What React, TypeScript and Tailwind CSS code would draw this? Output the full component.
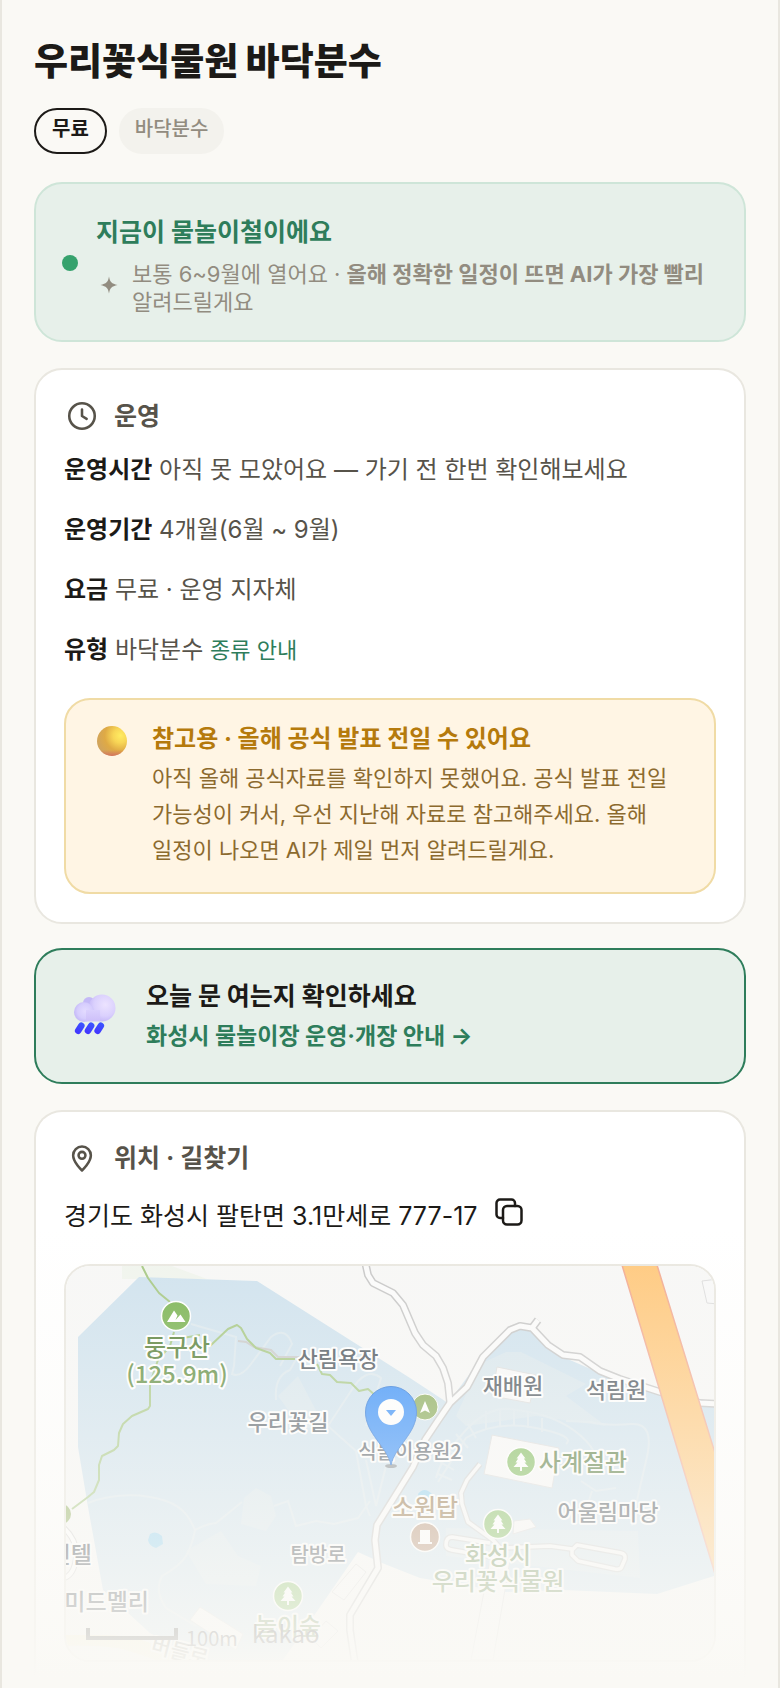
import type { ReactNode } from "react";

const FONT = "font-['Inter','Noto_Sans_CJK_KR',sans-serif]";

function ClockIcon() {
  return (
    <svg viewBox="0 0 24 24" className="size-9 shrink-0" fill="none" stroke="currentColor" strokeWidth="1.7" strokeLinecap="round" strokeLinejoin="round" aria-hidden="true">
      <circle cx="12" cy="12" r="8.5" />
      <path d="M12 7.6V12l3.1 1.9" />
    </svg>
  );
}

function PlaceIcon() {
  return (
    <svg viewBox="0 0 24 24" className="size-9 shrink-0" fill="none" stroke="currentColor" strokeWidth="1.7" strokeLinecap="round" strokeLinejoin="round" aria-hidden="true">
      <path d="M12 20.3s5.9-5.3 5.9-10.1a5.9 5.9 0 0 0-11.8 0c0 4.8 5.9 10.1 5.9 10.1z" />
      <circle cx="12" cy="10.2" r="2.3" />
    </svg>
  );
}

function CopyIcon() {
  return (
    <svg viewBox="0 0 28 28" className="size-7" fill="none" stroke="currentColor" strokeWidth="2.5" strokeLinejoin="round" strokeLinecap="round" aria-hidden="true">
      <rect x="8" y="8" width="18.5" height="18.5" rx="4" />
      <path d="M8 20H5a3.5 3.5 0 0 1-3.5-3.5V5A3.5 3.5 0 0 1 5 1.5h11.5A3.5 3.5 0 0 1 20 5v3" />
    </svg>
  );
}

function SparkleIcon() {
  return (
    <svg viewBox="0 0 26 26" className="mt-3 size-[26px] shrink-0" fill="currentColor" aria-hidden="true">
      <path d="M13 4.5c.9 5.3 2.600 7.200 8.500 8.500-5.900 1.300-7.600 3.200-8.500 8.500-.9-5.300-2.600-7.200-8.500-8.500 5.900-1.300 7.600-3.200 8.500-8.500z" />
    </svg>
  );
}

function OrbIcon() {
  return (
    <svg viewBox="0 0 36 36" className="size-9 shrink-0" aria-hidden="true">
      <defs>
        <radialGradient id="orb" cx="0.78" cy="0.32" r="0.8">
          <stop offset="0" stopColor="#ffec62" />
          <stop offset="0.3" stopColor="#f8d656" />
          <stop offset="0.65" stopColor="#dfaa45" />
          <stop offset="1" stopColor="#d1a45c" />
        </radialGradient>
        <linearGradient id="orbShade" x1="0" y1="0" x2="0" y2="1">
          <stop offset="0.8" stopColor="#d4685f" stopOpacity="0" />
          <stop offset="1" stopColor="#d4685f" stopOpacity="0.85" />
        </linearGradient>
      </defs>
      <circle cx="18" cy="17" r="15" fill="url(#orb)" />
      <circle cx="18" cy="17" r="15" fill="url(#orbShade)" />
    </svg>
  );
}

function RainCloudIcon() {
  return (
    <svg viewBox="0 2 58 58" className="size-[58px] shrink-0" aria-hidden="true">
      <defs>
        <radialGradient id="cloudBig" cx="0.62" cy="0.38" r="0.7">
          <stop offset="0" stopColor="#ece3ff" />
          <stop offset="0.6" stopColor="#dad0fd" />
          <stop offset="1" stopColor="#c0b2f6" />
        </radialGradient>
        <radialGradient id="cloudSmall" cx="0.55" cy="0.45" r="0.62">
          <stop offset="0" stopColor="#e3dbff" />
          <stop offset="0.6" stopColor="#d6cdfd" />
          <stop offset="1" stopColor="#beb2f5" />
        </radialGradient>
        <linearGradient id="cloudBase" x1="0" y1="0" x2="0" y2="1">
          <stop offset="0" stopColor="#dad0fd" />
          <stop offset="1" stopColor="#cdbff9" />
        </linearGradient>
        <linearGradient id="drop" x1="0" y1="0" x2="0" y2="1">
          <stop offset="0" stopColor="#3a55ff" />
          <stop offset="1" stopColor="#4334ff" />
        </linearGradient>
      </defs>
      <circle cx="23" cy="18" r="6" fill="#c4b9f7" />
      <circle cx="36" cy="23" r="13.5" fill="url(#cloudBig)" />
      <circle cx="18" cy="27" r="10" fill="url(#cloudSmall)" />
      <path d="M20 25H34V36.500H20z" fill="url(#cloudBase)" />
      <g fill="url(#drop)">
        <rect x="10.500" y="37" width="6.500" height="12.500" rx="3.250" transform="rotate(32 13.750 43.250)" />
        <rect x="20.300" y="37" width="6.500" height="12.500" rx="3.250" transform="rotate(32 23.550 43.250)" />
        <rect x="30" y="37" width="6.500" height="12.500" rx="3.250" transform="rotate(32 33.250 43.250)" />
      </g>
    </svg>
  );
}

function InfoRow({ label, children }: { label: string; children: ReactNode }) {
  return (
    <p className="text-[24px] leading-[44px] text-[#57534a]">
      <strong className="font-bold text-[#1c1a17]">{label}</strong> {children}
    </p>
  );
}

type Label = { text: string; x: number; y: number; size: number; color: string; anchor?: "start" | "middle" | "end" };

const labels: Label[] = [
  { text: "둥구산", x: 111, y: 90, size: 24, color: "#537d35" },
  { text: "(125.9m)", x: 111, y: 117, size: 24, color: "#5f8d40" },
  { text: "산림욕장", x: 272, y: 101, size: 22, color: "#4b545c" },
  { text: "우리꽃길", x: 222, y: 164, size: 22, color: "#59626b" },
  { text: "식물이용원2", x: 344, y: 193, size: 20, color: "#59626b" },
  { text: "재배원", x: 447, y: 128, size: 22, color: "#4b545c" },
  { text: "석림원", x: 550, y: 132, size: 22, color: "#4b545c" },
  { text: "사계절관", x: 517, y: 205, size: 24, color: "#55793c" },
  { text: "어울림마당", x: 542, y: 254, size: 22, color: "#4b535a" },
  { text: "소원탑", x: 359, y: 250, size: 24, color: "#927145" },
  { text: "화성시", x: 432, y: 298, size: 24, color: "#6f8f58" },
  { text: "우리꽃식물원", x: 432, y: 324, size: 24, color: "#6f8f58" },
  { text: "탐방로", x: 252, y: 296, size: 20, color: "#3f474f" },
  { text: "놀이숲", x: 222, y: 369, size: 24, color: "#6f8f58" },
  { text: "인텔", x: 26, y: 297, size: 23, color: "#3f474f", anchor: "end" },
  { text: "미드멜리", x: 83, y: 344, size: 23, color: "#3f474f", anchor: "end" },
];

const roads = [
  "M300 -4V0L302 9 307 17 327 27 337 39 349 67 357 79 370 90 377 102 382 117 384 136",
  "M652 138 634 137 594 126 554 113 534 105 514 91 497 89 482 79 466 62 454 60 444 64 417 91 401 121 384 137 371 156 359 174 347 201 334 222 311 259 309 274 312 302 284 349 284 364 289 398",
  "M466 62 472 54",
];

const lanes = [
  "M414 198 401 214 395 227 396 238 402 256 427 274 434 282 484 280 506 283",
  "M511 279 555 287Q560 288 559 293L556 300Q555 304 549 303L512 295 506 289 506 284z",
  "M424 277 386 271Q380 271 380 279 380 283 386 284L432 292",
];

const faintPaths = [
  "M22 237C50 226 80 228 100 235S125 255 129 264Q140 258 150 257L176 236",
  "M129 264Q126 280 120 290T96 310Q88 325 100 342L130 360",
  "M125 58 170 71 168 100 166 108Q175 112 185 98L205 71Q220 60 226 78L214 100",
  "M210 134Q208 110 224 104L232 90M262 160 285 125Q300 100 315 112L300 160",
  "M262 160 290 185 300 240 304 250M300 194 310 240 320 200",
  "M208 240 222 235 230 260 250 255 268 258 292 252 304 235",
  "M370 212Q376 190 400 164T450 144Q490 148 515 170T524 210 M372 216 400 172Q430 154 470 162T500 178",
  "M420 145v18M434 144v16M448 144v16M462 146v16M476 152v14M402 158l8 14M390 168l12 14M380 182l14 10M374 196l14 8M372 208l14 6",
  "M500 155 525 156Q540 160 565 158T580 195L572 230 566 260M515 215 530 225 550 222M526 225 518 250",
];

function TreeBadge({ x, y }: { x: number; y: number }) {
  return (
    <g transform={`translate(${x} ${y})`}>
      <circle r="14.5" fill="#7fbb5b" stroke="#fff" strokeWidth="1.5" />
      <path d="M0-9.500 4.500-3.500H2.800L5.500.5H3.500L7.500 5H1V9H-1V5H-7.500L-3.500.5H-5.500L-2.800-3.500H-4.500z" fill="#fff" />
    </g>
  );
}

function LocationMap() {
  return (
    <svg viewBox="0 0 648 394" preserveAspectRatio="xMidYMid slice" className="block h-auto w-full" role="img" aria-label="우리꽃식물원 바닥분수 위치 지도">
      <rect width="648" height="394" fill="#f7f7f6" />
      <path d="M56 0h50l35 13H56z" fill="#f0f4ed" />
      <path
        d="M73 11 191 15 344 112 382 137 414 94 440 66 454 62 466 64 497 91 534 107 567 121 648 140V310L591 328 497 324 440 326 354 312 316 297 292 286 254 341 217 394H130L84 367 61 346 37 324 22 241 12 181V71z"
        fill="#cfe2ee"
      />
      <g fill="#d8e6ed">
        <path d="M212 130 232 110 258 160 236 163zM414 98 440 86 455 86 520 118 500 130 540 160 470 150 400 160 390 150z" />
        <path d="M178 232 190 222 205 230 210 250 200 265 175 258zM120 285 155 265 172 290 195 300 190 320 140 318z" />
        <path d="M380 262 572 265 574 312 380 290z" />
      </g>
      <g fill="none" stroke="#dce8ee" strokeWidth="2">
        {faintPaths.map((d) => (
          <path key={d} d={d} />
        ))}
      </g>
      <path d="M84 268q6-4 12 2l1 8-7 4q-7-2-8-8zM352 228q6-8 14 0v8h-12z" fill="#8fd0f0" />
      <path d="M0 369H40Q70 370 86 378L130 394H90L60 384Q40 379 0 380z" fill="#f8f2d4" />
      <g fill="#f8f8f8" stroke="#dcdcdc" strokeWidth="1">
        <path d="M426 169 493 182 486 222 418 208zM431 101 470 109 464 137 426 130zM448 255 464 253 470 261 447 268zM636 15 652 13 652 38 641 37z" />
        <path d="M290 298 300 306 278 334 266 326zM134 341 177 368 170 384 124 354zM260 355 272 365 255 382 245 372z" />
      </g>
      <path d="M424 294 405 394H427L444 294z" fill="#f8f8f8" stroke="#dcdcdc" strokeWidth="1" />
      <g fill="none" strokeLinejoin="round">
        <path d="M-2 262Q12 275 10 292T-2 312" stroke="#d2d2d2" strokeWidth="6" />
        <path d="M-2 262Q12 275 10 292T-2 312" stroke="#fff" strokeWidth="4" />
        {lanes.map((d) => (
          <path key={d} d={d} stroke="#cfd1d2" strokeWidth="6" />
        ))}
        {roads.map((d) => (
          <path key={d} d={d} stroke="#c6c6c6" strokeWidth="8" />
        ))}
        {lanes.map((d) => (
          <path key={d} d={d} stroke="#f8f8f8" strokeWidth="3.5" />
        ))}
        {roads.map((d) => (
          <path key={d} d={d} stroke="#fbfbfb" strokeWidth="5" />
        ))}
      </g>
      <path d="M172 75 180 76 188 81 205 84 212 91 234 91" fill="none" stroke="#c9c9c9" strokeWidth="2" />
      <g fill="none" stroke="#a5c782" strokeWidth="2" strokeLinejoin="round">
        <path d="M76 0 82 12 93 27 104 36" />
        <path d="M108 66 104 80 92 94 84 117 84 140 82 143 66 150 57 158 53 167 52 180 48 184 36 190 33 199 33 214 28 226 22 231 6 243" />
        <path d="M117 72 134 69M144 80 162 63 171 59 175 62 181 73 190 82 204 87 210 93 229 93M251 98 256 108 264 109 271 116 285 117 293 125 302 123 310 130" />
      </g>
      <path d="M556 -1H591L649 187V308z" fill="#ffc87c" stroke="#f2aa90" strokeWidth="1.5" />

      <circle cx="-5" cy="248" r="10" fill="#8fae5e" />
      <circle cx="110" cy="50" r="14.5" fill="#78b24f" stroke="#fff" strokeWidth="1.5" />
      <path d="M101 56 108 44.500 111.500 49.500 109.500 54 114.500 48.500 119.500 56z" fill="#fff" />
      <circle cx="359" cy="141" r="13" fill="#86a955" stroke="#fff" strokeWidth="1" />
      <path d="M359 135 364 147 359 144.500 354 147z" fill="#fff" />
      <TreeBadge x={455} y={196} />
      <TreeBadge x={432} y={258} />
      <TreeBadge x={222} y={330} />
      <circle cx="359" cy="271" r="14.5" fill="#b58e72" stroke="#fff" strokeWidth="1.5" />
      <path d="M354 264H364V276H366V278H352V276H354z" fill="#fff" />

      <g fontFamily="'Noto Sans CJK KR', sans-serif" fontWeight="500" stroke="#fff" strokeWidth="4" strokeLinejoin="round" paintOrder="stroke">
        {labels.map((l) => (
          <text key={l.text} x={l.x} y={l.y} fontSize={l.size} fill={l.color} textAnchor={l.anchor ?? "middle"}>
            {l.text}
          </text>
        ))}
        <text x="84" y="386" fontSize="21" fill="#8a8a80" transform="rotate(14 84 386)">
          버들로
        </text>
      </g>

      <ellipse cx="325" cy="200" rx="6" ry="2" fill="#555" opacity="0.6" />
      <path d="M325 199C321 180 299.500 168 299.500 146A25.500 25.500 0 0 1 350.500 146C350.500 168 329 180 325 199z" fill="#318cfa" stroke="#2573d8" strokeWidth="1" />
      <circle cx="325" cy="146" r="13" fill="#fff" />
      <path d="M320 144H330L325 150z" fill="#318cfa" />

      <path d="M22 362V372H110V362" fill="none" stroke="#444" strokeWidth="4" />
      <text x="120" y="380" fontSize="20" fill="#555" fontFamily="'Noto Sans CJK KR', sans-serif">
        100m
      </text>
      <text x="186" y="377" fontSize="24" fill="#444" fontFamily="'Noto Sans CJK KR', sans-serif">
        kakao
      </text>
    </svg>
  );
}

export default function App() {
  return (
    <div className={`relative mx-auto min-h-screen max-w-[780px] overflow-hidden border-x-2 border-[#e9e7e0] bg-[#faf9f5] ${FONT} text-[#1c1a17]`}>
      <main className="flex flex-col px-8 pt-[34px]">
        <h1 className="text-[37px] leading-[56px] font-black">우리꽃식물원 바닥분수</h1>

        <div className="mt-[18px] flex gap-3 text-[20px] leading-[38px]">
          <span className="rounded-full border-2 border-[#1c1a17] px-4 pb-1 font-bold">무료</span>
          <span className="rounded-full border-2 border-[#f3f2ed] bg-[#f3f2ed] px-[14px] pb-1 font-medium text-[#928c80]">바닥분수</span>
        </div>

        <section className="mt-7 flex items-center gap-[18px] rounded-[28px] border-2 border-[#cee5d8] bg-[#e7f0ea] px-[26px] pt-[26px] pb-6">
          <span className="size-4 shrink-0 rounded-full bg-[#36a26d]" />
          <div>
            <h2 className="text-[25px] leading-[44px] font-bold text-[#2e7d5b]">지금이 물놀이철이에요</h2>
            <div className="mt-[6px] flex items-start gap-[10px] text-[#928c80]">
              <SparkleIcon />
              <p className="text-[22px] leading-7 break-keep">
                보통 6~9월에 열어요 · <strong className="font-bold">올해 정확한 일정이 뜨면 AI가 가장 빨리</strong> 알려드릴게요
              </p>
            </div>
          </div>
        </section>

        <section className="mt-[26px] rounded-[28px] border-2 border-[#e9e7e0] bg-white p-7">
          <h2 className="mb-[14px] flex items-center gap-[14px] text-[25px] leading-9 font-bold text-[#57534a]">
            <ClockIcon />
            운영
          </h2>
          <div className="flex flex-col gap-4">
            <InfoRow label="운영시간">아직 못 모았어요 — 가기 전 한번 확인해보세요</InfoRow>
            <InfoRow label="운영기간">4개월(6월 ~ 9월)</InfoRow>
            <InfoRow label="요금">무료 · 운영 지자체</InfoRow>
            <InfoRow label="유형">
              바닥분수{" "}
              <a href="#types" className="text-[22px] leading-none text-[#2e7d5b]">
                종류 안내
              </a>
            </InfoRow>
          </div>
          <div className="mt-[26px] flex gap-[22px] rounded-[26px] border-2 border-[#f0dba5] bg-[#fff5e4] px-7 py-6">
            <OrbIcon />
            <div>
              <h3 className="text-[24px] leading-[30px] font-bold text-[#b57a0c]">참고용 · 올해 공식 발표 전일 수 있어요</h3>
              <p className="mt-[6px] text-[22px] leading-9 break-keep text-[#8c6a2e]">
                아직 올해 공식자료를 확인하지 못했어요. 공식 발표 전일 가능성이 커서, 우선 지난해 자료로 참고해주세요. 올해 일정이 나오면 AI가 제일 먼저 알려드릴게요.
              </p>
            </div>
          </div>
        </section>

        <a href="#notice" className="mt-6 flex items-center gap-[22px] rounded-[28px] border-2 border-[#2e7d5b] bg-[#e7f0ea] px-[30px] py-[26px]">
          <RainCloudIcon />
          <span className="flex flex-col leading-10 font-bold">
            <span className="text-[25px]">오늘 문 여는지 확인하세요</span>
            <span className="text-[23px] text-[#2e7d5b]">화성시 물놀이장 운영·개장 안내 →</span>
          </span>
        </a>

        <section className="mt-[26px] rounded-t-[28px] border-2 border-b-0 border-[#e9e7e0] bg-white p-7 pb-[26px]">
          <h2 className="mb-[18px] flex items-center gap-[14px] text-[25px] leading-9 font-bold text-[#57534a]">
            <PlaceIcon />
            위치 · 길찾기
          </h2>
          <div className="flex items-center gap-[18px]">
            <p className="text-[25px] leading-[44px]">경기도 화성시 팔탄면 3.1만세로 777-17</p>
            <button type="button" aria-label="주소 복사" className="pb-2">
              <CopyIcon />
            </button>
          </div>
          <div className="mt-[26px] overflow-hidden rounded-[26px] border-2 border-[#e9e7e0]">
            <LocationMap />
          </div>
        </section>
      </main>
      <div className="pointer-events-none absolute inset-x-0 bottom-0 h-[460px] bg-[linear-gradient(to_bottom,rgba(250,249,245,0)_0%,rgba(250,249,245,0.85)_88%,rgb(250,249,245)_98%)]" />
    </div>
  );
}
